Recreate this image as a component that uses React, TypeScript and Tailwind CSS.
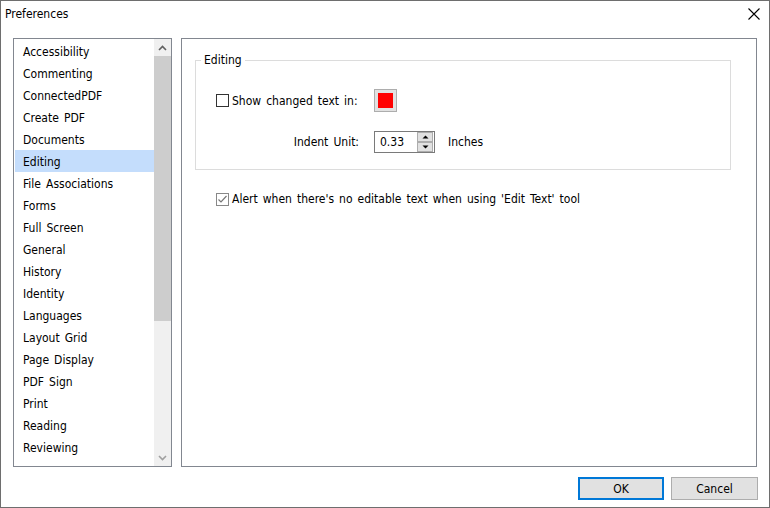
import React from "react";

const items = [
  "Accessibility",
  "Commenting",
  "ConnectedPDF",
  "Create PDF",
  "Documents",
  "Editing",
  "File Associations",
  "Forms",
  "Full Screen",
  "General",
  "History",
  "Identity",
  "Languages",
  "Layout Grid",
  "Page Display",
  "PDF Sign",
  "Print",
  "Reading",
  "Reviewing",
];

const font = {
  fontFamily: '"DejaVu Sans Condensed", "DejaVu Sans", sans-serif',
  wordSpacing: "1.6px",
};

export default function App() {
  return (
    <div
      className="w-[770px] h-[508px] border border-[#6e6e6e] bg-white flex flex-col text-[12px] text-black overflow-hidden"
      style={font}
    >
      {/* Title bar */}
      <div className="h-[25px] flex items-center justify-between pl-[4px] pr-[9px]">
        <span className="leading-none">Preferences</span>
        <svg width="12" height="12" viewBox="0 0 12 12" className="mt-[1px]">
          <path d="M0.5 0.5 L11.5 11.5 M11.5 0.5 L0.5 11.5" stroke="#000" strokeWidth="1.1" />
        </svg>
      </div>

      {/* Main */}
      <div className="flex pl-[12px] mt-[12px] gap-[9px]">
        {/* List */}
        <div className="w-[159px] h-[429px] border border-[#828790] flex">
          <div className="flex-1 pt-[1px] pl-[1px]">
            {items.map((it) => (
              <div
                key={it}
                className={`h-[22px] flex items-center pl-[8px] pt-[2px] ${it === "Editing" ? "bg-[#c4ddfc]" : ""}`}
              >
                {it}
              </div>
            ))}
          </div>
          <div className="w-[17px] bg-[#f0f0f0] flex flex-col">
            <div className="h-[17px] flex items-center justify-center">
              <svg width="9" height="6" viewBox="0 0 9 6">
                <path d="M1 5 L4.5 1.5 L8 5" stroke="#606060" strokeWidth="1.6" fill="none" />
              </svg>
            </div>
            <div className="h-[265px] bg-[#cdcdcd]" />
            <div className="flex-1" />
            <div className="h-[17px] flex items-center justify-center">
              <svg width="9" height="6" viewBox="0 0 9 6">
                <path d="M1 1 L4.5 4.5 L8 1" stroke="#a0a0a0" strokeWidth="1.6" fill="none" />
              </svg>
            </div>
          </div>
        </div>

        {/* Panel */}
        <div className="w-[576px] h-[429px] border border-[#828790] pl-[13px]">
          {/* Groupbox */}
          <div className="relative mt-[21px] w-[536px] h-[110px] border border-[#dcdcdc] pt-[28px]">
            <span className="absolute left-[5px] top-[-9px] bg-white px-[3px] leading-[16px]">Editing</span>
            <div className="flex items-center h-[23px]">
              <div className="w-[178px] pl-[20px] flex items-center">
                <div className="w-[13px] h-[13px] border border-[#333] bg-white" />
                <span className="ml-[3px]">Show changed text in:</span>
              </div>
              <div className="w-[23px] h-[23px] border border-[#adadad] bg-[#e1e1e1] p-[3px]">
                <div className="w-full h-full bg-[#ff0000]" />
              </div>
            </div>
            <div className="flex items-center h-[22px] mt-[19px]">
              <div className="w-[178px] pr-[15px] text-right">Indent Unit:</div>
              <div className="w-[61px] h-[22px] border border-[#7a7a7a] flex items-center">
                <span className="pl-[5px] flex-1">0.33</span>
                <div className="flex flex-col w-[16px] h-[20px]">
                  <div className="h-[10px] border border-[#adadad] bg-[#e1e1e1] flex items-center justify-center">
                    <svg width="7" height="4" viewBox="0 0 7 4">
                      <path d="M0.5 3.5 L3.5 0.5 L6.5 3.5 Z" fill="#000" />
                    </svg>
                  </div>
                  <div className="h-[10px] border border-[#adadad] bg-[#e1e1e1] flex items-center justify-center">
                    <svg width="7" height="4" viewBox="0 0 7 4">
                      <path d="M0.5 0.5 L3.5 3.5 L6.5 0.5 Z" fill="#000" />
                    </svg>
                  </div>
                </div>
                <span className="w-[1px]" />
              </div>
              <span className="ml-[13px]">Inches</span>
            </div>
          </div>

          <div className="flex items-center mt-[22px] pl-[21px] h-[14px]">
            <div className="w-[13px] h-[13px] border border-[#888] bg-white flex items-center justify-center">
              <svg width="11" height="11" viewBox="0 0 11 11">
                <path d="M1.5 5.5 L4 8 L9.5 2" stroke="#777" strokeWidth="1.2" fill="none" />
              </svg>
            </div>
            <span className="ml-[3px]">Alert when there's no editable text when using 'Edit Text' tool</span>
          </div>
        </div>
      </div>

      {/* Buttons */}
      <div className="flex justify-end gap-[7px] pr-[11px] mt-[10px]">
        <button className="w-[86px] h-[23px] border-2 border-[#0078d7] bg-[#e1e1e1] flex items-center justify-center">
          OK
        </button>
        <button className="w-[87px] h-[23px] border border-[#adadad] bg-[#e1e1e1] flex items-center justify-center">
          Cancel
        </button>
      </div>
    </div>
  );
}
